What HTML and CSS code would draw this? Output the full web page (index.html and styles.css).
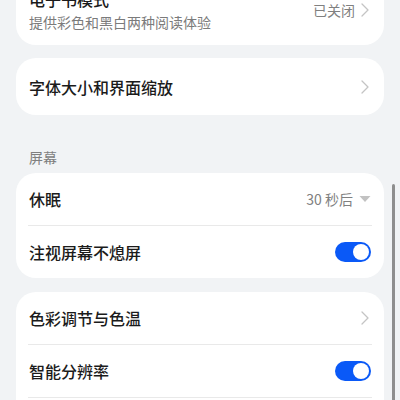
FILE: index.html
```html
<!DOCTYPE html>
<html lang="zh-CN">
<head>
<meta charset="utf-8">
<link rel="stylesheet" href="styles.css">
</head>
<body>
<div class="page">
  <div class="card card-first">
    <div class="row row-double">
      <div class="texts">
        <div class="title">电子书模式</div>
        <div class="sub">提供彩色和黑白两种阅读体验</div>
      </div>
      <div class="trail">
        <span class="value">已关闭</span>
        <svg class="chev" width="8" height="14" viewBox="0 0 8 14"><path d="M1 1 L7 7 L1 13" fill="none" stroke="#c4c4c4" stroke-width="1.3" stroke-linecap="round" stroke-linejoin="round"/></svg>
      </div>
    </div>
  </div>

  <div class="card card-second">
    <div class="row row-single">
      <div class="title">字体大小和界面缩放</div>
      <div class="trail">
        <svg class="chev" width="8" height="14" viewBox="0 0 8 14"><path d="M1 1 L7 7 L1 13" fill="none" stroke="#c4c4c4" stroke-width="1.3" stroke-linecap="round" stroke-linejoin="round"/></svg>
      </div>
    </div>
  </div>

  <div class="section">屏幕</div>

  <div class="card">
    <div class="row">
      <div class="title">休眠</div>
      <div class="trail">
        <span class="value">30 秒后</span>
        <svg class="tri" width="12" height="8" viewBox="0 0 12 8"><path d="M0.5 1 L11.5 1 L6 7 Z" fill="#c2c2c2"/></svg>
      </div>
    </div>
    <div class="divider"></div>
    <div class="row">
      <div class="title">注视屏幕不熄屏</div>
      <div class="toggle on"><span class="knob"></span></div>
    </div>
  </div>

  <div class="card card-fourth">
    <div class="row">
      <div class="title">色彩调节与色温</div>
      <div class="trail">
        <svg class="chev" width="8" height="14" viewBox="0 0 8 14"><path d="M1 1 L7 7 L1 13" fill="none" stroke="#c4c4c4" stroke-width="1.3" stroke-linecap="round" stroke-linejoin="round"/></svg>
      </div>
    </div>
    <div class="divider"></div>
    <div class="row">
      <div class="title">智能分辨率</div>
      <div class="toggle on"><span class="knob"></span></div>
    </div>
    <div class="divider"></div>
    <div class="row">
      <div class="title">&nbsp;</div>
    </div>
  </div>
</div>
<div class="scrollbar"></div>
</body>
</html>
```

FILE: styles.css
```css
html, body {
  margin: 0;
  padding: 0;
  background: #f1f3f5;
  overflow: hidden;
  height: 400px;
}

body {
  font-family: "Noto Sans CJK SC", "Noto Sans", sans-serif;
  color: #1a1a1a;
  position: relative;
}

.page {
  padding: 0 16px;
  margin-top: -25px;
  display: flex;
  flex-direction: column;
}

.card {
  background: #ffffff;
  border-radius: 20px;
  padding: 0 12px;
}

.card-second {
  margin-top: 13px;
}

.card-fourth {
  margin-top: 14px;
}

.row {
  height: 52px;
  display: flex;
  align-items: center;
  justify-content: space-between;
}

.row-double {
  height: 70px;
}

.row-single {
  height: 57px;
}

.texts {
  display: flex;
  flex-direction: column;
  gap: 2px;
}

.title {
  font-size: 16px;
  line-height: 22px;
  font-weight: 500;
  color: #1b1b1b;
  padding-left: 1px;
}

.sub {
  font-size: 14px;
  line-height: 20px;
  color: #7b7b7b;
  padding-left: 1px;
}

.trail {
  display: flex;
  align-items: center;
  gap: 6px;
  padding-right: 3px;
}

.value {
  font-size: 14px;
  line-height: 20px;
  color: #808080;
}

.chev {
  display: block;
}

.tri {
  display: block;
  margin-right: -2px;
}

.divider {
  height: 1px;
  background: #e9e9e9;
}

.section {
  font-size: 14px;
  line-height: 20px;
  color: #7f7f7f;
  margin: 32px 0 6px 13px;
}

.toggle {
  width: 36px;
  height: 20px;
  border-radius: 10px;
  background: #0a59f7;
  position: relative;
  margin-right: 1px;
}

.knob {
  position: absolute;
  top: 2px;
  right: 2px;
  width: 16px;
  height: 16px;
  border-radius: 50%;
  background: #ffffff;
}

.scrollbar {
  position: absolute;
  left: 392px;
  top: 184px;
  width: 3px;
  height: 230px;
  border-radius: 2px;
  background: #8e8e8e;
}
```
